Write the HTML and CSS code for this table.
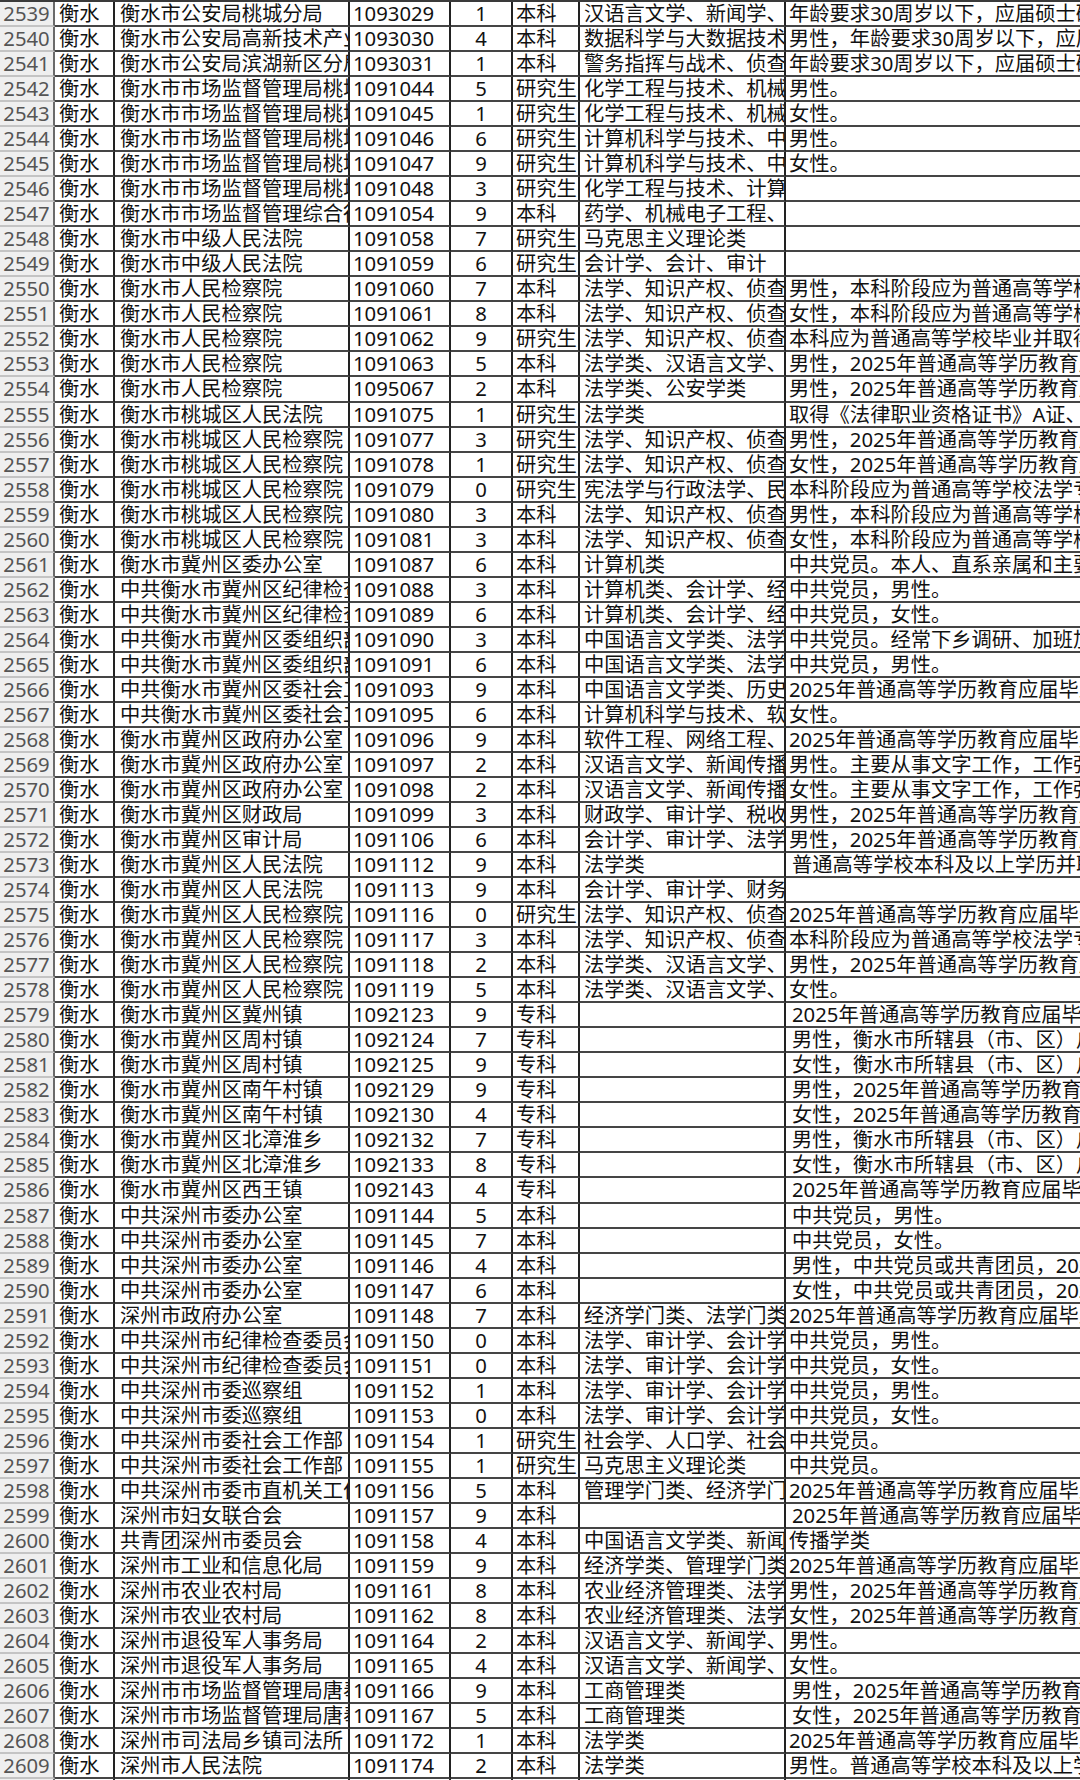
FILE: index.html
```html
<!DOCTYPE html>
<html lang="zh-CN">
<head>
<meta charset="utf-8">
<title>职位表</title>
<link rel="stylesheet" href="styles.css">
</head>
<body>
<div class="sheet">
<div class="row"><div class="c n">2539</div><div class="c city">衡水</div><div class="c unit">衡水市公安局桃城分局</div><div class="c code">1093029</div><div class="c cnt">1</div><div class="c deg">本科</div><div class="c major">汉语言文学、新闻学、广告学</div><div class="c note">年龄要求30周岁以下，应届硕士研究生</div></div>
<div class="row"><div class="c n">2540</div><div class="c city">衡水</div><div class="c unit">衡水市公安局高新技术产业开发区分局</div><div class="c code">1093030</div><div class="c cnt">4</div><div class="c deg">本科</div><div class="c major">数据科学与大数据技术、计算机</div><div class="c note">男性，年龄要求30周岁以下，应届硕士</div></div>
<div class="row"><div class="c n">2541</div><div class="c city">衡水</div><div class="c unit">衡水市公安局滨湖新区分局</div><div class="c code">1093031</div><div class="c cnt">1</div><div class="c deg">本科</div><div class="c major">警务指挥与战术、侦查学</div><div class="c note">年龄要求30周岁以下，应届硕士研究生</div></div>
<div class="row"><div class="c n">2542</div><div class="c city">衡水</div><div class="c unit">衡水市市场监督管理局桃城区分局</div><div class="c code">1091044</div><div class="c cnt">5</div><div class="c deg">研究生</div><div class="c major">化学工程与技术、机械工程</div><div class="c note">男性。</div></div>
<div class="row"><div class="c n">2543</div><div class="c city">衡水</div><div class="c unit">衡水市市场监督管理局桃城区分局</div><div class="c code">1091045</div><div class="c cnt">1</div><div class="c deg">研究生</div><div class="c major">化学工程与技术、机械工程</div><div class="c note">女性。</div></div>
<div class="row"><div class="c n">2544</div><div class="c city">衡水</div><div class="c unit">衡水市市场监督管理局桃城区分局</div><div class="c code">1091046</div><div class="c cnt">6</div><div class="c deg">研究生</div><div class="c major">计算机科学与技术、中国语言文学</div><div class="c note">男性。</div></div>
<div class="row"><div class="c n">2545</div><div class="c city">衡水</div><div class="c unit">衡水市市场监督管理局桃城区分局</div><div class="c code">1091047</div><div class="c cnt">9</div><div class="c deg">研究生</div><div class="c major">计算机科学与技术、中国语言文学</div><div class="c note">女性。</div></div>
<div class="row"><div class="c n">2546</div><div class="c city">衡水</div><div class="c unit">衡水市市场监督管理局桃城区分局</div><div class="c code">1091048</div><div class="c cnt">3</div><div class="c deg">研究生</div><div class="c major">化学工程与技术、计算机科学</div><div class="c note"></div></div>
<div class="row"><div class="c n">2547</div><div class="c city">衡水</div><div class="c unit">衡水市市场监督管理综合行政执法支队</div><div class="c code">1091054</div><div class="c cnt">9</div><div class="c deg">本科</div><div class="c major">药学、机械电子工程、食品</div><div class="c note"></div></div>
<div class="row"><div class="c n">2548</div><div class="c city">衡水</div><div class="c unit">衡水市中级人民法院</div><div class="c code">1091058</div><div class="c cnt">7</div><div class="c deg">研究生</div><div class="c major">马克思主义理论类</div><div class="c note"></div></div>
<div class="row"><div class="c n">2549</div><div class="c city">衡水</div><div class="c unit">衡水市中级人民法院</div><div class="c code">1091059</div><div class="c cnt">6</div><div class="c deg">研究生</div><div class="c major">会计学、会计、审计</div><div class="c note"></div></div>
<div class="row"><div class="c n">2550</div><div class="c city">衡水</div><div class="c unit">衡水市人民检察院</div><div class="c code">1091060</div><div class="c cnt">7</div><div class="c deg">本科</div><div class="c major">法学、知识产权、侦查学</div><div class="c note">男性，本科阶段应为普通高等学校</div></div>
<div class="row"><div class="c n">2551</div><div class="c city">衡水</div><div class="c unit">衡水市人民检察院</div><div class="c code">1091061</div><div class="c cnt">8</div><div class="c deg">本科</div><div class="c major">法学、知识产权、侦查学</div><div class="c note">女性，本科阶段应为普通高等学校</div></div>
<div class="row"><div class="c n">2552</div><div class="c city">衡水</div><div class="c unit">衡水市人民检察院</div><div class="c code">1091062</div><div class="c cnt">9</div><div class="c deg">研究生</div><div class="c major">法学、知识产权、侦查学</div><div class="c note">本科应为普通高等学校毕业并取得</div></div>
<div class="row"><div class="c n">2553</div><div class="c city">衡水</div><div class="c unit">衡水市人民检察院</div><div class="c code">1091063</div><div class="c cnt">5</div><div class="c deg">本科</div><div class="c major">法学类、汉语言文学、新闻学</div><div class="c note">男性，2025年普通高等学历教育应届</div></div>
<div class="row"><div class="c n">2554</div><div class="c city">衡水</div><div class="c unit">衡水市人民检察院</div><div class="c code">1095067</div><div class="c cnt">2</div><div class="c deg">本科</div><div class="c major">法学类、公安学类</div><div class="c note">男性，2025年普通高等学历教育应届</div></div>
<div class="row"><div class="c n">2555</div><div class="c city">衡水</div><div class="c unit">衡水市桃城区人民法院</div><div class="c code">1091075</div><div class="c cnt">1</div><div class="c deg">研究生</div><div class="c major">法学类</div><div class="c note">取得《法律职业资格证书》A证、B证</div></div>
<div class="row"><div class="c n">2556</div><div class="c city">衡水</div><div class="c unit">衡水市桃城区人民检察院</div><div class="c code">1091077</div><div class="c cnt">3</div><div class="c deg">研究生</div><div class="c major">法学、知识产权、侦查学</div><div class="c note">男性，2025年普通高等学历教育应届</div></div>
<div class="row"><div class="c n">2557</div><div class="c city">衡水</div><div class="c unit">衡水市桃城区人民检察院</div><div class="c code">1091078</div><div class="c cnt">1</div><div class="c deg">研究生</div><div class="c major">法学、知识产权、侦查学</div><div class="c note">女性，2025年普通高等学历教育应届</div></div>
<div class="row"><div class="c n">2558</div><div class="c city">衡水</div><div class="c unit">衡水市桃城区人民检察院</div><div class="c code">1091079</div><div class="c cnt">0</div><div class="c deg">研究生</div><div class="c major">宪法学与行政法学、民商法学</div><div class="c note">本科阶段应为普通高等学校法学专业</div></div>
<div class="row"><div class="c n">2559</div><div class="c city">衡水</div><div class="c unit">衡水市桃城区人民检察院</div><div class="c code">1091080</div><div class="c cnt">3</div><div class="c deg">本科</div><div class="c major">法学、知识产权、侦查学</div><div class="c note">男性，本科阶段应为普通高等学校</div></div>
<div class="row"><div class="c n">2560</div><div class="c city">衡水</div><div class="c unit">衡水市桃城区人民检察院</div><div class="c code">1091081</div><div class="c cnt">3</div><div class="c deg">本科</div><div class="c major">法学、知识产权、侦查学</div><div class="c note">女性，本科阶段应为普通高等学校</div></div>
<div class="row"><div class="c n">2561</div><div class="c city">衡水</div><div class="c unit">衡水市冀州区委办公室</div><div class="c code">1091087</div><div class="c cnt">6</div><div class="c deg">本科</div><div class="c major">计算机类</div><div class="c note">中共党员。本人、直系亲属和主要</div></div>
<div class="row"><div class="c n">2562</div><div class="c city">衡水</div><div class="c unit">中共衡水市冀州区纪律检查委员会</div><div class="c code">1091088</div><div class="c cnt">3</div><div class="c deg">本科</div><div class="c major">计算机类、会计学、经济学</div><div class="c note">中共党员，男性。</div></div>
<div class="row"><div class="c n">2563</div><div class="c city">衡水</div><div class="c unit">中共衡水市冀州区纪律检查委员会</div><div class="c code">1091089</div><div class="c cnt">6</div><div class="c deg">本科</div><div class="c major">计算机类、会计学、经济学</div><div class="c note">中共党员，女性。</div></div>
<div class="row"><div class="c n">2564</div><div class="c city">衡水</div><div class="c unit">中共衡水市冀州区委组织部</div><div class="c code">1091090</div><div class="c cnt">3</div><div class="c deg">本科</div><div class="c major">中国语言文学类、法学类</div><div class="c note">中共党员。经常下乡调研、加班加点</div></div>
<div class="row"><div class="c n">2565</div><div class="c city">衡水</div><div class="c unit">中共衡水市冀州区委组织部</div><div class="c code">1091091</div><div class="c cnt">6</div><div class="c deg">本科</div><div class="c major">中国语言文学类、法学类</div><div class="c note">中共党员，男性。</div></div>
<div class="row"><div class="c n">2566</div><div class="c city">衡水</div><div class="c unit">中共衡水市冀州区委社会工作部</div><div class="c code">1091093</div><div class="c cnt">9</div><div class="c deg">本科</div><div class="c major">中国语言文学类、历史学类</div><div class="c note">2025年普通高等学历教育应届毕业生</div></div>
<div class="row"><div class="c n">2567</div><div class="c city">衡水</div><div class="c unit">中共衡水市冀州区委社会工作部</div><div class="c code">1091095</div><div class="c cnt">6</div><div class="c deg">本科</div><div class="c major">计算机科学与技术、软件工程</div><div class="c note">女性。</div></div>
<div class="row"><div class="c n">2568</div><div class="c city">衡水</div><div class="c unit">衡水市冀州区政府办公室</div><div class="c code">1091096</div><div class="c cnt">9</div><div class="c deg">本科</div><div class="c major">软件工程、网络工程、信息安全</div><div class="c note">2025年普通高等学历教育应届毕业生</div></div>
<div class="row"><div class="c n">2569</div><div class="c city">衡水</div><div class="c unit">衡水市冀州区政府办公室</div><div class="c code">1091097</div><div class="c cnt">2</div><div class="c deg">本科</div><div class="c major">汉语言文学、新闻传播学类</div><div class="c note">男性。主要从事文字工作，工作强度</div></div>
<div class="row"><div class="c n">2570</div><div class="c city">衡水</div><div class="c unit">衡水市冀州区政府办公室</div><div class="c code">1091098</div><div class="c cnt">2</div><div class="c deg">本科</div><div class="c major">汉语言文学、新闻传播学类</div><div class="c note">女性。主要从事文字工作，工作强度</div></div>
<div class="row"><div class="c n">2571</div><div class="c city">衡水</div><div class="c unit">衡水市冀州区财政局</div><div class="c code">1091099</div><div class="c cnt">3</div><div class="c deg">本科</div><div class="c major">财政学、审计学、税收学</div><div class="c note">男性，2025年普通高等学历教育应届</div></div>
<div class="row"><div class="c n">2572</div><div class="c city">衡水</div><div class="c unit">衡水市冀州区审计局</div><div class="c code">1091106</div><div class="c cnt">6</div><div class="c deg">本科</div><div class="c major">会计学、审计学、法学类</div><div class="c note">男性，2025年普通高等学历教育应届</div></div>
<div class="row"><div class="c n">2573</div><div class="c city">衡水</div><div class="c unit">衡水市冀州区人民法院</div><div class="c code">1091112</div><div class="c cnt">9</div><div class="c deg">本科</div><div class="c major">法学类</div><div class="c note ind">普通高等学校本科及以上学历并取得</div></div>
<div class="row"><div class="c n">2574</div><div class="c city">衡水</div><div class="c unit">衡水市冀州区人民法院</div><div class="c code">1091113</div><div class="c cnt">9</div><div class="c deg">本科</div><div class="c major">会计学、审计学、财务管理</div><div class="c note"></div></div>
<div class="row"><div class="c n">2575</div><div class="c city">衡水</div><div class="c unit">衡水市冀州区人民检察院</div><div class="c code">1091116</div><div class="c cnt">0</div><div class="c deg">研究生</div><div class="c major">法学、知识产权、侦查学</div><div class="c note">2025年普通高等学历教育应届毕业生</div></div>
<div class="row"><div class="c n">2576</div><div class="c city">衡水</div><div class="c unit">衡水市冀州区人民检察院</div><div class="c code">1091117</div><div class="c cnt">3</div><div class="c deg">本科</div><div class="c major">法学、知识产权、侦查学</div><div class="c note">本科阶段应为普通高等学校法学专业</div></div>
<div class="row"><div class="c n">2577</div><div class="c city">衡水</div><div class="c unit">衡水市冀州区人民检察院</div><div class="c code">1091118</div><div class="c cnt">2</div><div class="c deg">本科</div><div class="c major">法学类、汉语言文学、新闻学</div><div class="c note">男性，2025年普通高等学历教育应届</div></div>
<div class="row"><div class="c n">2578</div><div class="c city">衡水</div><div class="c unit">衡水市冀州区人民检察院</div><div class="c code">1091119</div><div class="c cnt">5</div><div class="c deg">本科</div><div class="c major">法学类、汉语言文学、新闻学</div><div class="c note">女性。</div></div>
<div class="row"><div class="c n">2579</div><div class="c city">衡水</div><div class="c unit">衡水市冀州区冀州镇</div><div class="c code">1092123</div><div class="c cnt">9</div><div class="c deg">专科</div><div class="c major"></div><div class="c note ind">2025年普通高等学历教育应届毕业生</div></div>
<div class="row"><div class="c n">2580</div><div class="c city">衡水</div><div class="c unit">衡水市冀州区周村镇</div><div class="c code">1092124</div><div class="c cnt">7</div><div class="c deg">专科</div><div class="c major"></div><div class="c note ind">男性，衡水市所辖县（市、区）户籍</div></div>
<div class="row"><div class="c n">2581</div><div class="c city">衡水</div><div class="c unit">衡水市冀州区周村镇</div><div class="c code">1092125</div><div class="c cnt">9</div><div class="c deg">专科</div><div class="c major"></div><div class="c note ind">女性，衡水市所辖县（市、区）户籍</div></div>
<div class="row"><div class="c n">2582</div><div class="c city">衡水</div><div class="c unit">衡水市冀州区南午村镇</div><div class="c code">1092129</div><div class="c cnt">9</div><div class="c deg">专科</div><div class="c major"></div><div class="c note ind">男性，2025年普通高等学历教育应届</div></div>
<div class="row"><div class="c n">2583</div><div class="c city">衡水</div><div class="c unit">衡水市冀州区南午村镇</div><div class="c code">1092130</div><div class="c cnt">4</div><div class="c deg">专科</div><div class="c major"></div><div class="c note ind">女性，2025年普通高等学历教育应届</div></div>
<div class="row"><div class="c n">2584</div><div class="c city">衡水</div><div class="c unit">衡水市冀州区北漳淮乡</div><div class="c code">1092132</div><div class="c cnt">7</div><div class="c deg">专科</div><div class="c major"></div><div class="c note ind">男性，衡水市所辖县（市、区）户籍</div></div>
<div class="row"><div class="c n">2585</div><div class="c city">衡水</div><div class="c unit">衡水市冀州区北漳淮乡</div><div class="c code">1092133</div><div class="c cnt">8</div><div class="c deg">专科</div><div class="c major"></div><div class="c note ind">女性，衡水市所辖县（市、区）户籍</div></div>
<div class="row"><div class="c n">2586</div><div class="c city">衡水</div><div class="c unit">衡水市冀州区西王镇</div><div class="c code">1092143</div><div class="c cnt">4</div><div class="c deg">专科</div><div class="c major"></div><div class="c note ind">2025年普通高等学历教育应届毕业生</div></div>
<div class="row"><div class="c n">2587</div><div class="c city">衡水</div><div class="c unit">中共深州市委办公室</div><div class="c code">1091144</div><div class="c cnt">5</div><div class="c deg">本科</div><div class="c major"></div><div class="c note ind">中共党员，男性。</div></div>
<div class="row"><div class="c n">2588</div><div class="c city">衡水</div><div class="c unit">中共深州市委办公室</div><div class="c code">1091145</div><div class="c cnt">7</div><div class="c deg">本科</div><div class="c major"></div><div class="c note ind">中共党员，女性。</div></div>
<div class="row"><div class="c n">2589</div><div class="c city">衡水</div><div class="c unit">中共深州市委办公室</div><div class="c code">1091146</div><div class="c cnt">4</div><div class="c deg">本科</div><div class="c major"></div><div class="c note ind">男性，中共党员或共青团员，2025年</div></div>
<div class="row"><div class="c n">2590</div><div class="c city">衡水</div><div class="c unit">中共深州市委办公室</div><div class="c code">1091147</div><div class="c cnt">6</div><div class="c deg">本科</div><div class="c major"></div><div class="c note ind">女性，中共党员或共青团员，2025年</div></div>
<div class="row"><div class="c n">2591</div><div class="c city">衡水</div><div class="c unit">深州市政府办公室</div><div class="c code">1091148</div><div class="c cnt">7</div><div class="c deg">本科</div><div class="c major">经济学门类、法学门类</div><div class="c note">2025年普通高等学历教育应届毕业生</div></div>
<div class="row"><div class="c n">2592</div><div class="c city">衡水</div><div class="c unit">中共深州市纪律检查委员会</div><div class="c code">1091150</div><div class="c cnt">0</div><div class="c deg">本科</div><div class="c major">法学、审计学、会计学</div><div class="c note">中共党员，男性。</div></div>
<div class="row"><div class="c n">2593</div><div class="c city">衡水</div><div class="c unit">中共深州市纪律检查委员会</div><div class="c code">1091151</div><div class="c cnt">0</div><div class="c deg">本科</div><div class="c major">法学、审计学、会计学</div><div class="c note">中共党员，女性。</div></div>
<div class="row"><div class="c n">2594</div><div class="c city">衡水</div><div class="c unit">中共深州市委巡察组</div><div class="c code">1091152</div><div class="c cnt">1</div><div class="c deg">本科</div><div class="c major">法学、审计学、会计学</div><div class="c note">中共党员，男性。</div></div>
<div class="row"><div class="c n">2595</div><div class="c city">衡水</div><div class="c unit">中共深州市委巡察组</div><div class="c code">1091153</div><div class="c cnt">0</div><div class="c deg">本科</div><div class="c major">法学、审计学、会计学</div><div class="c note">中共党员，女性。</div></div>
<div class="row"><div class="c n">2596</div><div class="c city">衡水</div><div class="c unit">中共深州市委社会工作部</div><div class="c code">1091154</div><div class="c cnt">1</div><div class="c deg">研究生</div><div class="c major">社会学、人口学、社会工作</div><div class="c note">中共党员。</div></div>
<div class="row"><div class="c n">2597</div><div class="c city">衡水</div><div class="c unit">中共深州市委社会工作部</div><div class="c code">1091155</div><div class="c cnt">1</div><div class="c deg">研究生</div><div class="c major">马克思主义理论类</div><div class="c note">中共党员。</div></div>
<div class="row"><div class="c n">2598</div><div class="c city">衡水</div><div class="c unit">中共深州市委市直机关工作委员会</div><div class="c code">1091156</div><div class="c cnt">5</div><div class="c deg">本科</div><div class="c major">管理学门类、经济学门类</div><div class="c note">2025年普通高等学历教育应届毕业生</div></div>
<div class="row"><div class="c n">2599</div><div class="c city">衡水</div><div class="c unit">深州市妇女联合会</div><div class="c code">1091157</div><div class="c cnt">9</div><div class="c deg">本科</div><div class="c major"></div><div class="c note ind">2025年普通高等学历教育应届毕业生</div></div>
<div class="row"><div class="c n">2600</div><div class="c city">衡水</div><div class="c unit">共青团深州市委员会</div><div class="c code">1091158</div><div class="c cnt">4</div><div class="c deg">本科</div><div class="c major">中国语言文学类、新闻</div><div class="c note">传播学类</div></div>
<div class="row"><div class="c n">2601</div><div class="c city">衡水</div><div class="c unit">深州市工业和信息化局</div><div class="c code">1091159</div><div class="c cnt">9</div><div class="c deg">本科</div><div class="c major">经济学类、管理学门类</div><div class="c note">2025年普通高等学历教育应届毕业生</div></div>
<div class="row"><div class="c n">2602</div><div class="c city">衡水</div><div class="c unit">深州市农业农村局</div><div class="c code">1091161</div><div class="c cnt">8</div><div class="c deg">本科</div><div class="c major">农业经济管理类、法学类</div><div class="c note">男性，2025年普通高等学历教育应届</div></div>
<div class="row"><div class="c n">2603</div><div class="c city">衡水</div><div class="c unit">深州市农业农村局</div><div class="c code">1091162</div><div class="c cnt">8</div><div class="c deg">本科</div><div class="c major">农业经济管理类、法学类</div><div class="c note">女性，2025年普通高等学历教育应届</div></div>
<div class="row"><div class="c n">2604</div><div class="c city">衡水</div><div class="c unit">深州市退役军人事务局</div><div class="c code">1091164</div><div class="c cnt">2</div><div class="c deg">本科</div><div class="c major">汉语言文学、新闻学、法学</div><div class="c note">男性。</div></div>
<div class="row"><div class="c n">2605</div><div class="c city">衡水</div><div class="c unit">深州市退役军人事务局</div><div class="c code">1091165</div><div class="c cnt">4</div><div class="c deg">本科</div><div class="c major">汉语言文学、新闻学、法学</div><div class="c note">女性。</div></div>
<div class="row"><div class="c n">2606</div><div class="c city">衡水</div><div class="c unit">深州市市场监督管理局唐奉所</div><div class="c code">1091166</div><div class="c cnt">9</div><div class="c deg">本科</div><div class="c major">工商管理类</div><div class="c note ind">男性，2025年普通高等学历教育应届</div></div>
<div class="row"><div class="c n">2607</div><div class="c city">衡水</div><div class="c unit">深州市市场监督管理局唐奉所</div><div class="c code">1091167</div><div class="c cnt">5</div><div class="c deg">本科</div><div class="c major">工商管理类</div><div class="c note ind">女性，2025年普通高等学历教育应届</div></div>
<div class="row"><div class="c n">2608</div><div class="c city">衡水</div><div class="c unit">深州市司法局乡镇司法所</div><div class="c code">1091172</div><div class="c cnt">1</div><div class="c deg">本科</div><div class="c major">法学类</div><div class="c note">2025年普通高等学历教育应届毕业生</div></div>
<div class="row"><div class="c n">2609</div><div class="c city">衡水</div><div class="c unit">深州市人民法院</div><div class="c code">1091174</div><div class="c cnt">2</div><div class="c deg">本科</div><div class="c major">法学类</div><div class="c note">男性。普通高等学校本科及以上学历</div></div>
<div class="row"><div class="c n">2610</div><div class="c city">衡水</div><div class="c unit">深州市人民法院</div><div class="c code">1091175</div><div class="c cnt">2</div><div class="c deg">本科</div><div class="c major">法学类</div><div class="c note">女性。普通高等学校本科及以上学历</div></div>
</div>
</body>
</html>
```
FILE: styles.css
```css
html, body {
  margin: 0;
  padding: 0;
  background: #ffffff;
  overflow: hidden;
}

.sheet {
  width: 1080px;
  border-top: 2px solid #3a3a3a;
  font-family: "Noto Sans", "Noto Sans CJK SC", sans-serif;
  font-size: 20.3px;
  color: #111111;
}

.row {
  display: grid;
  grid-template-columns: 55px 60px 235px 101px 62px 67px 206px 294px;
  height: 25.04px;
}

.c {
  box-sizing: border-box;
  height: 25.04px;
  line-height: 23px;
  border-right: 2px solid #222222;
  border-bottom: 2px solid #454545;
  white-space: nowrap;
  overflow: hidden;
  padding-left: 3px;
}

.n {
  background: #efefef;
  color: #555555;
  text-align: center;
  padding-left: 0;
  border-bottom-color: #c4c4c4;
  border-right-color: #6a6a6a;
}

.city { padding-left: 4px; }
.unit { padding-left: 5px; }
.code { padding-left: 3px; }
.cnt { text-align: center; padding-left: 0; }
.deg { padding-left: 3px; }
.major { padding-left: 4px; }
.note { padding-left: 3px; border-right: 0; }
.note.ind { padding-left: 6px; }
```
